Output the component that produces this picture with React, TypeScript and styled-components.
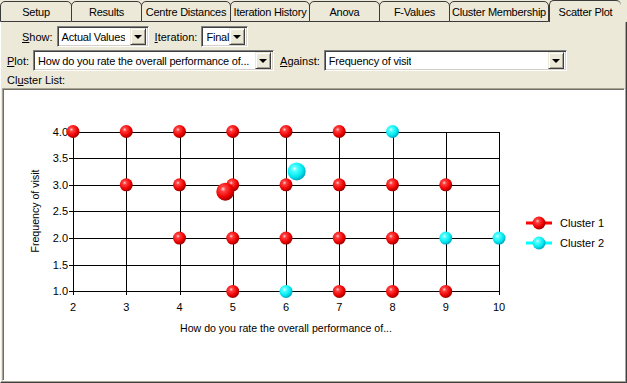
import React from "react"
import styled, { createGlobalStyle } from "styled-components"

const GlobalStyle = createGlobalStyle`
    html, body {
        margin: 0;
        padding: 0;
        background: #ECE9D8;
    }
    body {
        font-family: "Liberation Sans", Arial, sans-serif;
        font-size: 11px;
        color: #000000;
    }
`

const tabs = [
    { label: 'Setup', width: 72 },
    { label: 'Results', width: 71 },
    { label: 'Centre Distances', width: 90 },
    { label: 'Iteration History', width: 80 },
    { label: 'Anova', width: 71 },
    { label: 'F-Values', width: 71 },
    { label: 'Cluster Membership', width: 100 },
    { label: 'Scatter Plot', width: 72 },
]

// chart scale
const xPos = (v: number) => 74 + (v - 2) * 53.25
const yPos = (v: number) => 132.5 + (4 - v) * 53.3

type Point = { x: number, y: number, c: 1 | 2, big?: boolean }

const points: Point[] = [
    { x: 2, y: 4, c: 1 }, { x: 3, y: 4, c: 1 }, { x: 4, y: 4, c: 1 }, { x: 5, y: 4, c: 1 },
    { x: 6, y: 4, c: 1 }, { x: 7, y: 4, c: 1 }, { x: 8, y: 4, c: 2 },
    { x: 3, y: 3, c: 1 }, { x: 4, y: 3, c: 1 }, { x: 5, y: 3, c: 1 }, { x: 6, y: 3, c: 1 },
    { x: 7, y: 3, c: 1 }, { x: 8, y: 3, c: 1 }, { x: 9, y: 3, c: 1 },
    { x: 4, y: 2, c: 1 }, { x: 5, y: 2, c: 1 }, { x: 6, y: 2, c: 1 }, { x: 7, y: 2, c: 1 },
    { x: 8, y: 2, c: 1 }, { x: 9, y: 2, c: 2 }, { x: 10, y: 2, c: 2 },
    { x: 5, y: 1, c: 1 }, { x: 6, y: 1, c: 2 }, { x: 7, y: 1, c: 1 }, { x: 8, y: 1, c: 1 }, { x: 9, y: 1, c: 1 },
    { x: 4.86, y: 2.87, c: 1, big: true },
    { x: 6.2, y: 3.25, c: 2, big: true },
]

const Combo = ({ value, width }: { value: string, width: number }) => (
    <ComboBox $width={width}>
        <ComboValue>{value}</ComboValue>
        <DropButton><Arrow /></DropButton>
    </ComboBox>
)

const Sphere = ({ cx, cy, r, c }: { cx: number, cy: number, r: number, c: 1 | 2 }) => (
    <circle cx={cx} cy={cy} r={r} fill={c === 1 ? 'url(#redBall)' : 'url(#cyanBall)'} />
)

const Chart = () => {
    const xs = [2, 3, 4, 5, 6, 7, 8, 9, 10]
    const ys = [4, 3.5, 3, 2.5, 2, 1.5, 1]
    return (
        <svg width={618} height={289} viewBox="4 90 618 289" style={{ display: 'block' }}>
            <defs>
                <radialGradient id="redBall" cx="38%" cy="35%" r="65%">
                    <stop offset="0" stopColor="#ffd8d8" />
                    <stop offset="0.22" stopColor="#ff4040" />
                    <stop offset="0.7" stopColor="#ee0000" />
                    <stop offset="1" stopColor="#a00000" />
                </radialGradient>
                <radialGradient id="cyanBall" cx="38%" cy="35%" r="65%">
                    <stop offset="0" stopColor="#f0ffff" />
                    <stop offset="0.22" stopColor="#50ffff" />
                    <stop offset="0.7" stopColor="#00e8f0" />
                    <stop offset="1" stopColor="#00a8c0" />
                </radialGradient>
            </defs>
            <g stroke="#000" strokeWidth={1} shapeRendering="crispEdges">
                {ys.map(v => (
                    <line key={'h' + v} x1={70} x2={xPos(10)} y1={Math.round(yPos(v)) + 0.5} y2={Math.round(yPos(v)) + 0.5} />
                ))}
                {xs.map(v => (
                    <line key={'v' + v} x1={Math.round(xPos(v)) + 0.5} x2={Math.round(xPos(v)) + 0.5} y1={yPos(4)} y2={yPos(1) + 4} />
                ))}
            </g>
            <g fontFamily='"Liberation Sans", Arial, sans-serif' fontSize={11} fill="#000">
                {ys.map(v => (
                    <text key={'yl' + v} x={69} y={yPos(v) + 4} textAnchor="end">{v.toFixed(1)}</text>
                ))}
                {xs.map(v => (
                    <text key={'xl' + v} x={xPos(v)} y={312} textAnchor="middle">{v}</text>
                ))}
                <text x={287} y={333} textAnchor="middle" fontSize={10.6}>How do you rate the overall performance of...</text>
                <text x={0} y={0} textAnchor="middle" fontSize={10.6} transform="translate(40 212) rotate(-90)">Frequency of visit</text>
                <text x={561} y={228}>Cluster 1</text>
                <text x={561} y={248}>Cluster 2</text>
            </g>
            {points.map((p, i) => (
                <Sphere key={i} cx={xPos(p.x)} cy={yPos(p.y)} r={p.big ? 9 : 6.5} c={p.c} />
            ))}
            <line x1={527} x2={553} y1={224} y2={224} stroke="#ff0000" strokeWidth={3} />
            <Sphere cx={540} cy={224} r={6.5} c={1} />
            <line x1={527} x2={553} y1={244} y2={244} stroke="#00ffff" strokeWidth={3} />
            <Sphere cx={540} cy={244} r={6.5} c={2} />
        </svg>
    )
}

const App = () => {
    return (
        <Window>
            <GlobalStyle />
            <TabBar>
                {tabs.map(t => (
                    <Tab key={t.label} $width={t.width} $active={t.label === 'Scatter Plot'}>
                        {t.label}
                    </Tab>
                ))}
            </TabBar>
            <Panel>
                <Row $indent={15}>
                    <Label><u>S</u>how:</Label>
                    <Combo value="Actual Values" width={92} />
                    <Label $gap={3}><u>I</u>teration:</Label>
                    <Combo value="Final" width={47} />
                </Row>
                <Row $indent={0}>
                    <Label><u>P</u>lot:</Label>
                    <Combo value="How do you rate the overall performance of..." width={241} />
                    <Label $gap={3}><u>A</u>gainst:</Label>
                    <Combo value="Frequency of visit" width={243} />
                </Row>
                <ListLabel>Cl<u>u</u>ster List:</ListLabel>
                <ChartBox>
                    <Chart />
                </ChartBox>
            </Panel>
        </Window>
    )
}

const Window = styled.div`
    width: 627px;
    height: 383px;
    display: flex;
    flex-direction: column;
    background: #ECE9D8;
    overflow: hidden;
`

const TabBar = styled.div`
    height: 22px;
    display: flex;
    align-items: flex-end;
`

const Tab = styled.div<{ $width: number, $active: boolean }>`
    box-sizing: border-box;
    width: ${p => p.$width}px;
    height: ${p => p.$active ? 22 : 21}px;
    margin-left: ${p => p.$active ? 0 : -1}px;
    &:first-child { margin-left: 0; }
    display: flex;
    align-items: center;
    justify-content: center;
    padding-top: 1px;
    background: #ECE9D8;
    border: 1px solid #3a3a3a;
    border-bottom: ${p => p.$active ? 'none' : '1px solid #3a3a3a'};
    border-right: ${p => p.$active ? 'none' : '1px solid #3a3a3a'};
    border-radius: 5px 5px 0 0;
    white-space: nowrap;
    font-size: 11px;
    letter-spacing: -0.25px;
`

const Panel = styled.div`
    flex: 1;
    box-sizing: border-box;
    display: flex;
    flex-direction: column;
    padding: 4px 0 0 0;
    border-left: 1px solid #ffffff;
    border-right: 1px solid #404040;
    border-bottom: 1px solid #404040;
    box-shadow: inset -1px -1px 0 #a8a596;
`

const Row = styled.div<{ $indent: number }>`
    display: flex;
    align-items: center;
    height: 21px;
    margin: 0 0 3px ${p => 6 + p.$indent}px;
    gap: 3px;
`

const Label = styled.span<{ $gap?: number }>`
    margin-left: ${p => p.$gap || 0}px;
    margin-right: 1px;
    white-space: nowrap;
    u { text-decoration: underline; text-underline-offset: 1px; }
`

const ComboBox = styled.div<{ $width: number }>`
    box-sizing: border-box;
    width: ${p => p.$width}px;
    height: 21px;
    display: flex;
    align-items: center;
    justify-content: space-between;
    background: #ffffff;
    border: 1px solid;
    border-color: #808080 #ffffff #ffffff #808080;
    box-shadow: inset 1px 1px 0 #404040, inset -1px -1px 0 #d4d0c8;
    padding: 2px;
`

const ComboValue = styled.span`
    padding-left: 2px;
    white-space: nowrap;
    overflow: hidden;
    font-size: 11px;
    letter-spacing: -0.2px;
`

const DropButton = styled.div`
    box-sizing: border-box;
    width: 16px;
    height: 17px;
    flex-shrink: 0;
    display: flex;
    align-items: center;
    justify-content: center;
    background: #ECE9D8;
    border: 1px solid;
    border-color: #ECE9D8 #404040 #404040 #ECE9D8;
    box-shadow: inset 1px 1px 0 #ffffff, inset -1px -1px 0 #a8a596;
`

const Arrow = styled.div`
    width: 0;
    height: 0;
    border-left: 4px solid transparent;
    border-right: 4px solid transparent;
    border-top: 4px solid #000000;
    margin-top: 1px;
`

const ListLabel = styled.div`
    height: 14px;
    line-height: 14px;
    padding-left: 6px;
    margin-top: -1px;
    margin-bottom: 1px;
`

const ChartBox = styled.div`
    flex: 1;
    margin: 0 1px 1px 1px;
    background: #ffffff;
    border: 1px solid;
    border-color: #a8a596 #ffffff #ffffff #a8a596;
    box-shadow: inset 1px 1px 0 #716f64;
    overflow: hidden;
`

export default App
